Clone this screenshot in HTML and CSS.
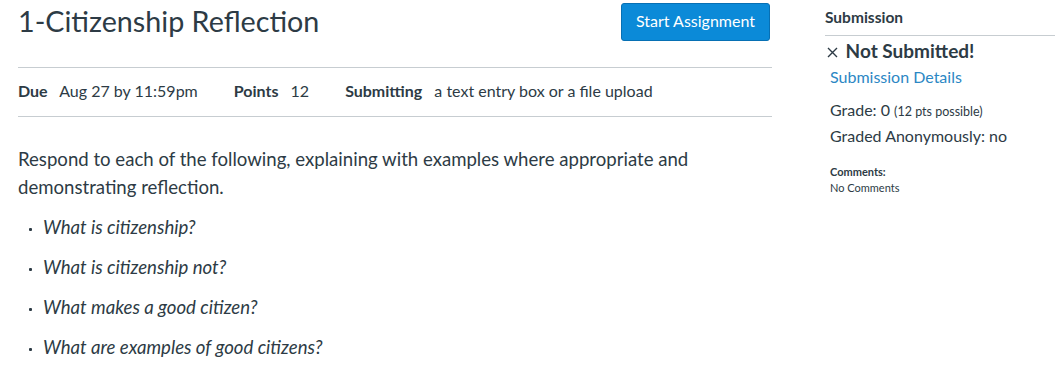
FILE: index.html
```html
<!DOCTYPE html>
<html lang="en">
<head>
    <meta charset="UTF-8">
    <title>1-Citizenship Reflection</title>
    <link rel="stylesheet" href="styles.css">
</head>
<body>
    <div class="page">
        <div class="main">
            <div class="title-row">
                <h1>1-Citizenship Reflection</h1>
                <button class="start-btn" type="button">Start Assignment</button>
            </div>
            <ul class="meta">
                <li><b>Due</b> <span>Aug 27 by 11:59pm</span></li>
                <li><b>Points</b> <span>12</span></li>
                <li><b>Submitting</b> <span>a text entry box or a file upload</span></li>
            </ul>
            <div class="description">
                <p>Respond to each of the following, explaining with examples where appropriate and demonstrating reflection.</p>
                <ul>
                    <li><em>What is citizenship?</em></li>
                    <li><em>What is citizenship not?</em></li>
                    <li><em>What makes a good citizen?</em></li>
                    <li><em>What are examples of good citizens?</em></li>
                </ul>
            </div>
        </div>
        <div class="sidebar">
            <h2>Submission</h2>
            <div class="status">
                <svg class="x" width="11" height="11" viewBox="0 0 11 11"><path d="M1 1L10 10M10 1L1 10" stroke="#2d3b45" stroke-width="1.4" fill="none"/></svg>
                Not Submitted!
            </div>
            <a class="details" href="#">Submission Details</a>
            <div class="grade">Grade: 0 <small>(12 pts possible)</small></div>
            <div class="grade">Graded Anonymously: no</div>
            <div class="comments">
                <b>Comments:</b>
                <div>No Comments</div>
            </div>
        </div>
    </div>
</body>
</html>
```

FILE: styles.css
```css
body {
    margin: 0;
    font-family: Lato, "Open Sans", sans-serif;
    color: #2d3b45;
    background: #fff;
}

.page {
    display: flex;
    padding: 0 4px 0 18px;
}

.main {
    width: 754px;
}

.title-row {
    display: flex;
    justify-content: space-between;
    align-items: flex-start;
    height: 67px;
    border-bottom: 1px solid #c7cdd1;
}

h1 {
    margin: 0;
    font-size: 28.7px;
    font-weight: 400;
    line-height: 42px;
}

.start-btn {
    margin: 3px 2px 0 0;
    height: 38px;
    padding: 0 14px 3px;
    border: 1px solid #0770b4;
    border-radius: 3px;
    background: #0b8ad8;
    color: #fff;
    font-family: inherit;
    font-size: 16px;
}

.meta {
    display: flex;
    gap: 36px;
    margin: 0;
    padding: 0;
    list-style: none;
    height: 48px;
    line-height: 46px;
    font-size: 16px;
    border-bottom: 1px solid #c7cdd1;
}

.meta b {
    margin-right: 8px;
}

.description {
    padding-top: 28px;
    font-size: 18.6px;
    line-height: 28px;
}

.description p {
    margin: 0 0 12px;
}

.description ul {
    margin: 0;
    padding-left: 25px;
    list-style: none;
}

.description li {
    position: relative;
    margin-bottom: 12px;
}

.description li::before {
    content: "";
    position: absolute;
    left: -14px;
    top: 15px;
    width: 3px;
    height: 3px;
    border-radius: 1px;
    background: #2d3b45;
}

.sidebar {
    margin-left: 53px;
    width: 230px;
    font-size: 16px;
}

.sidebar h2 {
    margin: 0;
    padding: 6px 0 7px;
    font-size: 15.5px;
    line-height: 22px;
    border-bottom: 1px solid #c7cdd1;
}

.status {
    margin-top: 3px;
    font-size: 19px;
    font-weight: 700;
    line-height: 24px;
}

.status .x {
    margin: 0 3px 0 2px;
    vertical-align: 0;
}

.details {
    display: block;
    margin: 3px 0 0 5px;
    color: #2b87c4;
    text-decoration: none;
    line-height: 22px;
}

.grade {
    margin-left: 5px;
    line-height: 24px;
}

.details + .grade {
    margin-top: 10px;
}

.grade small {
    font-size: 12.5px;
}

.comments {
    margin: 16px 0 0 5px;
    font-size: 11px;
    line-height: 16px;
}
```
